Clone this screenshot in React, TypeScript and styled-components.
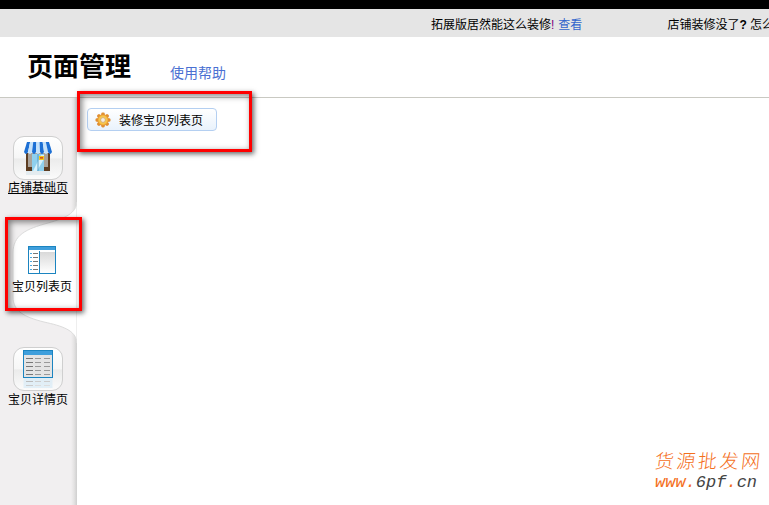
import React from "react";
import styled, { createGlobalStyle } from "styled-components";

const Global = createGlobalStyle`
  html, body { margin: 0; padding: 0; background: #fff; overflow: hidden; }
  body { font-family: "Liberation Sans", "Noto Sans CJK SC", sans-serif; }
`;

const Page = styled.div`
  position: relative;
  width: 769px;
  height: 505px;
  overflow: hidden;
  display: flex;
  flex-direction: column;
  background: #fff;
`;
const TopBar = styled.div`
  height: 9px;
  flex: none;
  background: #000;
`;
const NoticeBar = styled.div`
  height: 28px;
  flex: none;
  background: #e5e5e5;
  display: flex;
  align-items: center;
  padding-left: 431px;
  font-size: 12px;
  color: #000;
  white-space: nowrap;
`;
const Notice = styled.span<{ $gap?: number }>`
  margin-left: ${(p) => p.$gap ?? 0}px;
  flex: none;
`;
const Bang = styled.span`
  color: #800080;
  margin-right: 4px;
`;
const Strong = styled.b`
  font-weight: 700;
`;
const NoticeLink = styled.a`
  color: #3366cc;
`;
const Header = styled.header`
  height: 61px;
  flex: none;
  box-sizing: border-box;
  border-bottom: 1px solid #c9c9c2;
  display: flex;
  align-items: flex-start;
  padding-left: 27px;
`;
const Title = styled.h1`
  margin: 13px 0 0;
  font-size: 26px;
  line-height: 34px;
  font-weight: 700;
  color: #000;
`;
const HelpLink = styled.a`
  margin: 26px 0 0 39px;
  font-size: 14px;
  line-height: 20px;
  color: #4a70d2;
`;
const Body = styled.div`
  flex: 1;
  display: flex;
  min-height: 0;
`;
const Sidebar = styled.nav`
  position: relative;
  width: 77px;
  flex: none;
  box-sizing: border-box;
  padding-top: 38px;
  background: linear-gradient(to right, #f1eff0 0, #f1eff0 71px, #e4e3e3 74px, #cfcfcf 77px);
  display: flex;
  flex-direction: column;
  align-items: flex-start;
`;
const Wave = styled.svg`
  position: absolute;
  left: 0;
  top: 95px;
`;
const Tab = styled.a<{ $top: number; $left: number; $gap: number; $underline?: boolean }>`
  position: relative;
  margin-top: ${(p) => p.$top}px;
  width: 60px;
  align-self: flex-start;
  margin-left: ${(p) => p.$left}px;
  display: flex;
  flex-direction: column;
  align-items: center;
  gap: ${(p) => p.$gap}px;
  font-size: 12px;
  line-height: 16px;
  color: #000;
  white-space: nowrap;
  text-decoration: ${(p) => (p.$underline ? "underline" : "none")};
`;
const IconTile = styled.span`
  box-sizing: border-box;
  width: 50px;
  height: 44px;
  border: 1px solid #cfcfcf;
  border-radius: 11px;
  background: linear-gradient(to bottom, #ffffff 0, #f6f6f6 50%, #ebebeb 52%, #fbfbfb 100%);
  display: flex;
  align-items: center;
  justify-content: center;
`;
const Plain = styled.span`
  width: 30px;
  height: 30px;
  display: flex;
  justify-content: center;
`;
const Main = styled.main`
  flex: 1;
  padding: 10px 0 0 10px;
  background: #fff;
`;
const ActionButton = styled.button`
  box-sizing: border-box;
  width: 130px;
  height: 23px;
  padding: 0 0 0 7px;
  display: flex;
  align-items: center;
  gap: 8px;
  border: 1px solid #b4cff1;
  border-radius: 4px;
  background: linear-gradient(to bottom, #ffffff, #e9f2fc);
  font-family: inherit;
  font-size: 12px;
  color: #000;
`;
const Callout = styled.div<{ $x: number; $y: number; $w: number; $h: number }>`
  position: absolute;
  left: ${(p) => p.$x}px;
  top: ${(p) => p.$y}px;
  width: ${(p) => p.$w}px;
  height: ${(p) => p.$h}px;
  box-sizing: border-box;
  border: 3px solid #ff0000;
  box-shadow: 2px 2px 5px rgba(0, 0, 0, 0.6), inset 2px 2px 6px rgba(0, 0, 0, 0.5);
`;
const Watermark = styled.div`
  position: absolute;
  left: 655px;
  top: 447px;
  width: 112px;
`;
const MarkName = styled.div`
  font-family: "Noto Sans CJK SC", sans-serif;
  font-weight: 300;
  font-size: 19px;
  line-height: 26px;
  letter-spacing: 2.6px;
  color: #f46f1c;
  white-space: nowrap;
  transform: skewX(-6deg);
`;
const MarkUrl = styled.div`
  font-family: "Liberation Mono", monospace;
  font-style: italic;
  font-size: 17px;
  line-height: 20px;
  color: #444;
  white-space: nowrap;
`;
const Orange = styled.span`
  color: #f46f1c;
`;

const GearIcon = () => (
  <svg width="16" height="16" viewBox="0 0 16 16">
    <defs>
      <radialGradient id="gr" cx="50%" cy="50%" r="55%">
        <stop offset="0" stopColor="#ffe58a" />
        <stop offset="0.65" stopColor="#f7c244" />
        <stop offset="1" stopColor="#d9782a" />
      </radialGradient>
    </defs>
    {[0, 45, 90, 135].map((a) => (
      <rect key={a} x="6.2" y="0.5" width="3.6" height="15" rx="1.4" fill="#e08f33" transform={`rotate(${a} 8 8)`} />
    ))}
    <circle cx="8" cy="8" r="5.7" fill="url(#gr)" />
    <circle cx="8" cy="8" r="2.4" fill="#f4eee2" stroke="#c99a63" strokeWidth="0.7" />
  </svg>
);

const StoreIcon = () => (
  <svg width="28" height="34" viewBox="0 0 28 34">
    <rect x="2" y="12" width="24" height="18" fill="#a9a39b" />
    <rect x="2" y="26" width="6" height="4" fill="#5d3d22" />
    <rect x="20" y="26" width="6" height="4" fill="#5d3d22" />
    <rect x="2" y="12" width="2" height="18" fill="#5d3d22" />
    <rect x="24" y="12" width="2" height="18" fill="#5d3d22" />
    <rect x="8" y="13" width="12" height="17" fill="#8fd0ee" />
    <path d="M9 30 L17 14 H20 V18 L13 30 Z" fill="#d8f2fc" />
    <rect x="13.6" y="13" width="0.8" height="17" fill="#3f8db8" />
    <rect x="15" y="15" width="5" height="4" fill="#f5c81f" />
    <rect x="16" y="16.2" width="3" height="1.4" fill="#d2401a" />
    {[0, 1, 2, 3, 4, 5, 6].map((i) => {
      const t0 = 3 + i * 3.14;
      const b0 = i * 4;
      return (
        <path
          key={i}
          d={`M${t0} 1 H${t0 + 3.14} L${b0 + 4} 11 Q${b0 + 2} 15 ${b0} 11 Z`}
          fill={i % 2 === 0 ? "#1c6fd4" : "#c5e2fa"}
        />
      );
    })}
    <rect x="2" y="30" width="24" height="4" fill="#dfe9ee" opacity="0.8" />
  </svg>
);

const ListIcon = () => (
  <svg width="28" height="28" viewBox="0 0 28 28">
    <defs>
      <linearGradient id="pane" x1="0" y1="0" x2="0" y2="1">
        <stop offset="0" stopColor="#d9d9d9" />
        <stop offset="1" stopColor="#ffffff" />
      </linearGradient>
    </defs>
    <rect x="0.5" y="0.5" width="27" height="27" fill="#fff" stroke="#1b84c0" />
    <rect x="1" y="1" width="26" height="3" fill="#3f9fdc" />
    <rect x="11" y="5" width="1" height="22" fill="#1b84c0" />
    <rect x="12" y="6" width="15" height="21" fill="url(#pane)" />
    {[7, 11, 15, 19, 23].map((y) => (
      <g key={y}>
        <rect x="2" y={y} width="2" height="1" fill="#4aa8e0" />
        <rect x="5" y={y} width="5" height="1" fill="#777" />
      </g>
    ))}
  </svg>
);

const TableIcon = () => (
  <svg width="30" height="38" viewBox="0 0 30 38">
    <rect x="0.5" y="0.5" width="29" height="27" fill="#e4e4e4" stroke="#1b84c0" />
    <rect x="1" y="1" width="28" height="4" fill="#3f9fdc" />
    {[8, 12, 16, 20, 24].map((y) => (
      <g key={y}>
        <rect x="3" y={y} width="7" height="1" fill="#777" />
        <rect x="12" y={y} width="6" height="1" fill="#999" />
        <rect x="21" y={y} width="6" height="1" fill="#999" />
      </g>
    ))}
    <rect x="0.5" y="28" width="29" height="10" fill="#dcecf6" opacity="0.8" />
    <rect x="3" y="31" width="7" height="1" fill="#bbb" />
    <rect x="12" y="31" width="6" height="1" fill="#ccc" />
    <rect x="21" y="31" width="6" height="1" fill="#ccc" />
    <rect x="3" y="35" width="7" height="1" fill="#ccc" />
    <rect x="12" y="35" width="6" height="1" fill="#ddd" />
    <rect x="21" y="35" width="6" height="1" fill="#ddd" />
  </svg>
);

export default function App() {
  return (
    <Page>
      <Global />
      <TopBar />
      <NoticeBar>
        <Notice>
          拓展版居然能这么装修<Bang>!</Bang>
          <NoticeLink>查看</NoticeLink>
        </Notice>
        <Notice $gap={85}>
          店铺装修没了<Strong>?</Strong> 怎么办
        </Notice>
      </NoticeBar>
      <Header>
        <Title>页面管理</Title>
        <HelpLink>使用帮助</HelpLink>
      </Header>
      <Body>
        <Sidebar>
          <Wave width="77" height="150" viewBox="0 0 77 150">
            <path
              d="M77 9 C76 20 66 25 48 30 C26 36 13 42 13 60 L13 104 C13 118 24 124 44 129 C62 133 76 137 77 150 Z"
              fill="#fff"
              stroke="#dcdcdc"
            />
          </Wave>
          <Tab $top={0} $left={8} $gap={0} $underline>
            <IconTile>
              <StoreIcon />
            </IconTile>
            店铺基础页
          </Tab>
          <Tab $top={50} $left={12} $gap={3}>
            <Plain>
              <ListIcon />
            </Plain>
            宝贝列表页
          </Tab>
          <Tab $top={52} $left={8} $gap={1}>
            <IconTile>
              <TableIcon />
            </IconTile>
            宝贝详情页
          </Tab>
        </Sidebar>
        <Main>
          <ActionButton>
            <GearIcon />
            装修宝贝列表页
          </ActionButton>
        </Main>
      </Body>
      <Callout $x={77} $y={91} $w={175} $h={61} />
      <Callout $x={5} $y={217} $w={77} $h={94} />
      <Watermark>
        <MarkName>货源批发网</MarkName>
        <MarkUrl>
          <Orange>www.</Orange>6pf<Orange>.</Orange>cn
        </MarkUrl>
      </Watermark>
    </Page>
  );
}
